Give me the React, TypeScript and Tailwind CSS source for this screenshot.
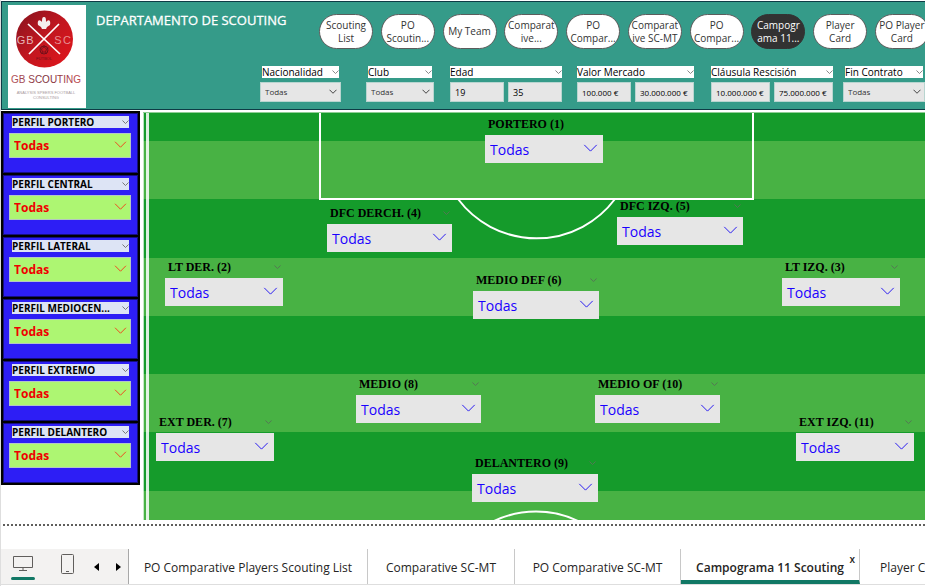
import React from "react";

function Chevron({ className }: { className: string }) {
  return (
    <svg viewBox="0 0 16 9" fill="none" stroke="currentColor" className={className} aria-hidden="true">
      <path d="M1 1l7 7 7-7" vectorEffect="non-scaling-stroke" />
    </svg>
  );
}

const pages = [
  ["Scouting", "List"],
  ["PO", "Scoutin..."],
  ["My Team"],
  ["Comparat", "ive..."],
  ["PO", "Compar..."],
  ["Comparat", "ive SC-MT"],
  ["PO", "Compar..."],
  ["Campogr", "ama 11..."],
  ["Player", "Card"],
  ["PO Player", "Card"],
];

const profiles = ["PERFIL PORTERO", "PERFIL CENTRAL", "PERFIL LATERAL", "PERFIL MEDIOCEN...", "PERFIL EXTREMO", "PERFIL DELANTERO"];

const positions = [
  { name: "PORTERO (1)", place: "left-[342px] top-[4px] w-[118px]", menu: false },
  { name: "DFC DERCH. (4)", place: "left-[184px] top-[93px] w-[125px]", menu: true },
  { name: "DFC IZQ. (5)", place: "left-[474px] top-[86px] w-[126px]", menu: true },
  { name: "LT DER. (2)", place: "left-[22px] top-[147px] w-[118px]", menu: true },
  { name: "LT IZQ. (3)", place: "left-[639px] top-[147px] w-[118px]", menu: true },
  { name: "MEDIO DEF (6)", place: "left-[330px] top-[160px] w-[126px]", menu: true },
  { name: "MEDIO (8)", place: "left-[213px] top-[264px] w-[125px]", menu: true },
  { name: "MEDIO OF (10)", place: "left-[452px] top-[264px] w-[125px]", menu: true },
  { name: "EXT DER. (7)", place: "left-[13px] top-[302px] w-[118px]", menu: true },
  { name: "EXT IZQ. (11)", place: "left-[653px] top-[302px] w-[118px]", menu: true },
  { name: "DELANTERO (9)", place: "left-[329px] top-[343px] w-[126px]", menu: true },
];

function Logo() {
  return (
    <svg viewBox="0 0 78 103" className="h-[103px] w-[78px] shrink-0 bg-white" role="img" aria-label="GB Scouting">
      <defs>
        <linearGradient id="disc" x1="0" y1="0" x2="1" y2="1">
          <stop offset="0" stopColor="#84141f" />
          <stop offset="0.5" stopColor="#c2161f" />
          <stop offset="1" stopColor="#e3161c" />
        </linearGradient>
        <linearGradient id="word" x1="0" y1="0" x2="1" y2="0">
          <stop offset="0" stopColor="#b5525a" />
          <stop offset="0.5" stopColor="#7d2f3a" />
          <stop offset="1" stopColor="#c04a50" />
        </linearGradient>
      </defs>
      <circle cx="36.500" cy="34" r="28.500" fill="url(#disc)" />
      <path d="M20 19l32 30M51 19L21 49" stroke="#fff" strokeWidth="1.700" />
      <path d="M30 20c-1-4 1-6 3-4l1 1c0-3 0-5 2-5s2 2 2 5l1-1c2-2 4 0 3 4l-3 2-1 2h-4l-1-2z" fill="#f5eded" />
      <circle cx="36" cy="45" r="4" fill="none" stroke="#701019" />
      <path d="M36 42l2.500 2-1 3h-3l-1-3zM36 42v-2M38.500 44l2-1M37.500 47l1 2M34.500 47l-1 2M33.500 44l-2-1" fill="none" stroke="#701019" strokeWidth="0.800" />
      <g fontFamily="'Liberation Sans', sans-serif" textAnchor="middle">
        <text x="13" y="39" fontSize="11" fill="#e8b4b5">G</text>
        <text x="22" y="39" fontSize="11" fill="#e8b4b5">B</text>
        <text x="50" y="39" fontSize="11" fill="#e88f92">S</text>
        <text x="59" y="39" fontSize="11" fill="#e88f92">C</text>
        <text x="36" y="55" fontSize="4" fill="#701019">FUTBOL</text>
        <text x="38" y="78" fontSize="10" fill="url(#word)">GB SCOUTING</text>
        <text x="38" y="89" fontSize="4" fill="#a89a9c">ANALYSIS SPEERS FOOTBALL</text>
        <text x="38" y="94" fontSize="4" fill="#a89a9c">CONSULTING</text>
      </g>
    </svg>
  );
}

function FilterTitle({ id, title, inset = false }: { id: string; title: string; inset?: boolean }) {
  return (
    <div className={inset ? "mx-[2px] flex h-3 items-center justify-between bg-white" : "flex h-3 items-center justify-between bg-white"}>
      <label htmlFor={id} className="whitespace-nowrap text-[10px] leading-3 text-black">{title}</label>
      <Chevron className="h-1 w-[7px] text-[#888]" />
    </div>
  );
}

function SelectFilter({ id, title, width }: { id: string; title: string; width: string }) {
  return (
    <div className={width}>
      <FilterTitle id={id} title={title} inset />
      <div className="relative mt-1">
        <select id={id} className="block h-5 w-full appearance-none border border-[#b9d5d0] bg-[#e6e6e6] px-1 text-[8px] leading-4 text-[#333]">
          <option>Todas</option>
        </select>
        <Chevron className="pointer-events-none absolute right-1 top-[7px] h-[5px] w-2 text-[#444]" />
      </div>
    </div>
  );
}

interface RangeProps {
  id: string;
  title: string;
  from: string;
  to: string;
  width: string;
  columns: string;
  size: string;
}

function RangeFilter({ id, title, from, to, width, columns, size }: RangeProps) {
  const field = `h-5 w-full min-w-0 border border-[#b9d5d0] bg-[#e6e6e6] px-1 leading-4 text-black ${size}`;
  return (
    <div className={width}>
      <FilterTitle id={id} title={title} />
      <div className={`mt-1 grid gap-1 ${columns}`}>
        <input id={id} defaultValue={from} className={field} />
        <input aria-label={`${title} máximo`} defaultValue={to} className={field} />
      </div>
    </div>
  );
}

function Header() {
  return (
    <header className="flex h-[109px] overflow-hidden border border-r-0 border-[#0e3b45] bg-[#359b89] pl-[6px] pt-[3px]">
      <Logo />
      <div className="ml-[10px] min-w-0 flex-1">
        <div className="flex justify-between">
          <h1 className="whitespace-nowrap pt-[6px] text-[13px] leading-[18px] text-white [-webkit-text-stroke:0.3px_white]">DEPARTAMENTO DE SCOUTING</h1>
          <nav className="-mr-1 flex w-[610px] shrink-0 justify-between pt-[9px]">
            {pages.map((lines, i) => (
              <button
                key={i}
                className={
                  i === 7
                    ? "h-[35px] w-[54px] rounded-full border border-[#333] bg-[#323232] text-[10px] leading-[13px] text-white"
                    : "h-[35px] w-[54px] rounded-full border border-[#5c5c5c] bg-white text-[10px] leading-[13px] text-[#333]"
                }
              >
                {lines.map((line) => (
                  <span key={line} className="-mx-1 block whitespace-nowrap text-center">{line}</span>
                ))}
              </button>
            ))}
          </nav>
        </div>
        <div className="mt-[17px] flex justify-end">
          <SelectFilter id="nacionalidad" title="Nacionalidad" width="mr-[25px] w-[81px]" />
          <SelectFilter id="club" title="Club" width="mr-[16px] w-[68px]" />
          <RangeFilter id="edad" title="Edad" from="19" to="35" width="mr-[15px] w-[112px]" columns="grid-cols-2" size="text-[9px]" />
          <RangeFilter id="valor" title="Valor Mercado" from="100.000 €" to="30.000.000 €" width="mr-[17px] w-[117px]" columns="grid-cols-[54px_1fr]" size="text-[8px]" />
          <RangeFilter id="clausula" title="Cláusula Rescisión" from="10.000.000 €" to="75.000.000 €" width="mr-[10px] w-[122px]" columns="grid-cols-2" size="text-[8px]" />
          <SelectFilter id="contrato" title="Fin Contrato" width="w-[82px]" />
        </div>
      </div>
    </header>
  );
}

function Sidebar() {
  return (
    <aside className="w-[139px] shrink-0 border-y border-black">
      {profiles.map((name, i) => (
        <section key={name} className="h-[62px] border-x-2 border-y border-black bg-[#2d1ef5] pl-[6px] pr-[7px] pt-[3px] shadow-[inset_0_0_0_1px_#160f80]">
          <div className="ml-[3px] mr-[2px] flex h-3 items-center justify-between bg-[#dde4f5]">
            <label htmlFor={`perfil-${i}`} className="whitespace-nowrap text-[10px] font-bold leading-3 text-black">{name}</label>
            <Chevron className="h-1 w-[7px] text-[#777]" />
          </div>
          <div className="relative mt-[5px]">
            <select id={`perfil-${i}`} className="block h-[25px] w-full appearance-none border border-[#b4c6c4] bg-[#adf672] px-1 text-[12px] font-bold leading-5 text-[#f00000]">
              <option>Todas</option>
            </select>
            <Chevron className="pointer-events-none absolute right-1 top-2 h-[7px] w-[13px] text-[#ee4a20]" />
          </div>
        </section>
      ))}
    </aside>
  );
}

function Pitch() {
  return (
    <main className="relative ml-[3px] h-[408px] min-w-0 flex-1 overflow-hidden bg-[#159b2b]">
      <svg className="absolute left-0 top-0 h-full w-full" aria-hidden="true">
        {[29, 146, 262, 379].map((y) => (
          <rect key={y} x="0" y={y} width="100%" height="58" fill="#48b244" />
        ))}
        <g fill="none" stroke="#fff">
          <path d="M0.500 0V408" strokeOpacity="0.700" />
          <path d="M4.500 0V408" strokeWidth="3" strokeOpacity="0.850" />
          <path d="M177 0V87H610V0" strokeWidth="2" />
          <path d="M315 87A98 98 0 0 0 472 87" strokeWidth="2" />
          <path d="M349 410A98 98 0 0 1 437 410" strokeWidth="2" />
        </g>
        <rect width="100%" height="1" fill="#8fce95" />
      </svg>
      {positions.map((p, i) => (
        <div key={p.name} className={`absolute ${p.place}`}>
          <div className="flex h-4 items-center justify-between pl-[3px] pr-[2px]">
            <label htmlFor={`posicion-${i}`} className="whitespace-nowrap font-['Liberation_Serif',serif] text-[12px] font-bold leading-4 text-black">{p.name}</label>
            {p.menu && <Chevron className="h-1 w-[7px] text-[#557755]" />}
          </div>
          <div className="relative mt-[3px]">
            <select id={`posicion-${i}`} className="block h-7 w-full appearance-none bg-[#e6e6e6] px-[5px] pt-[2px] text-[14px] leading-6 text-[#1a00ff]">
              <option>Todas</option>
            </select>
            <Chevron className="pointer-events-none absolute right-[5px] top-[9px] h-2 w-[15px] text-[#2a1cf0]" />
          </div>
        </div>
      ))}
    </main>
  );
}

function TabBar() {
  const tab = "shrink-0 whitespace-nowrap border-r border-[#c8c8c8] pt-[2px] text-[12px] text-[#252423]";
  return (
    <footer className="mt-[23px] flex h-9 overflow-hidden border-b border-[#dedede]">
      <div className="flex w-[128px] shrink-0 items-stretch border-r border-[#a8a8a8] bg-[#f3f2f1]">
        <button aria-label="Vista de escritorio" className="ml-[10px] flex w-6 flex-col items-center pt-[7px]">
          <svg width="20" height="15" fill="none" stroke="#605e5c" aria-hidden="true">
            <path d="M.5.500h19v11H.5zM10 12v2M6 14.500h8" />
          </svg>
          <span className="mt-[6px] h-[3px] w-6 rounded-sm bg-[#117865]" />
        </button>
        <button aria-label="Vista móvil" className="ml-[25px] flex w-[14px] justify-center pt-[5px]">
          <svg width="14" height="21" fill="none" stroke="#605e5c" aria-hidden="true">
            <rect x="1.500" y=".5" width="12" height="19" rx="1" />
            <path d="M6 17.500h3" />
          </svg>
        </button>
        <button aria-label="Página anterior" className="ml-[20px] flex items-center">
          <svg width="5" height="8" aria-hidden="true"><path d="M5 0v8L0 4z" /></svg>
        </button>
        <button aria-label="Página siguiente" className="ml-[17px] flex items-center">
          <svg width="5" height="8" aria-hidden="true"><path d="M0 0v8l5-4z" /></svg>
        </button>
      </div>
      <button className={`${tab} w-[239px]`}>PO Comparative Players Scouting List</button>
      <button className={`${tab} w-[147px]`}>Comparative SC-MT</button>
      <button className={`${tab} w-[166px]`}>PO Comparative SC-MT</button>
      <div className="relative flex w-[179px] shrink-0 border-b-4 border-r border-b-[#117865] border-r-[#c8c8c8]">
        <button className="flex-1 whitespace-nowrap pt-[6px] text-[12px] font-semibold text-[#252423]">Campograma 11 Scouting</button>
        <button aria-label="Cerrar página" className="absolute right-1 top-1 text-[10px] font-semibold leading-3 text-[#252423]">x</button>
      </div>
      <button className={`${tab} w-[110px] pl-5 text-left`}>Player Card</button>
    </footer>
  );
}

export default function App() {
  return (
    <div className="min-h-screen overflow-hidden border-l border-[#dedede] bg-white pt-px font-['Open_Sans','Noto_Sans',sans-serif]">
      <Header />
      <div className="mt-px flex items-start">
        <Sidebar />
        <div className="flex min-w-0 flex-1 pt-px">
          <Pitch />
        </div>
      </div>
      <div className="ml-[2px] mt-1 border-t-2 border-dotted border-[#605e5c]" />
      <TabBar />
    </div>
  );
}
